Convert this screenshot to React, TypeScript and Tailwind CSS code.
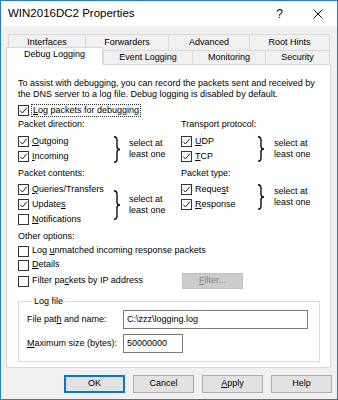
import React from "react";

function Check({ checked }: { checked?: boolean }) {
  return (
    <span className="w-[11px] h-[11px] border border-[#333333] bg-white flex items-center justify-center shrink-0">
      {checked && (
        <svg width="9" height="9" viewBox="0 0 9 9">
          <polyline points="1.2,4.6 3.4,7 7.8,1.6" fill="none" stroke="#222222" strokeWidth="1" />
        </svg>
      )}
    </span>
  );
}

function Row({ checked, children }: { checked?: boolean; children: React.ReactNode }) {
  return (
    <div className="flex items-center gap-[3px] h-[15px]">
      <Check checked={checked} />
      <span className="leading-[11px] whitespace-nowrap">{children}</span>
    </div>
  );
}

function Brace({ h }: { h: number }) {
  const m = h / 2;
  const d = `M1,0.8 Q4,0.8 4,4 L4,${m - 3} Q4,${m} 7,${m} Q4,${m} 4,${m + 3} L4,${h - 4} Q4,${h - 0.8} 1,${h - 0.8}`;
  return (
    <svg width="8" height={h} viewBox={`0 0 8 ${h}`} className="shrink-0">
      <path d={d} fill="none" stroke="#111111" strokeWidth="1.4" />
    </svg>
  );
}

function SelectText() {
  return (
    <div className="leading-[11px] whitespace-nowrap">
      <div>select at</div>
      <div>least one</div>
    </div>
  );
}

function Tab({ label, w, last }: { label: string; w: string; last?: boolean }) {
  return (
    <div
      className={`${w} h-full bg-[#f0f0f0] border-l border-t border-[#d9d9d9] flex items-center justify-center whitespace-nowrap ${
        last ? "border-r" : ""
      }`}
    >
      {label}
    </div>
  );
}

function Btn({ children, primary }: { children: React.ReactNode; primary?: boolean }) {
  return (
    <div
      className={`w-[61px] h-[18px] bg-[#e1e1e1] flex items-center justify-center ${
        primary ? "border-2 border-[#0078d7]" : "border border-[#adadad]"
      }`}
    >
      {children}
    </div>
  );
}

export default function App() {
  return (
    <div className="w-[338px] h-[400px] bg-[#f0f0f0] border border-[#1c7fd6] flex flex-col text-[9px] text-black font-['Liberation_Sans',Arial,sans-serif] overflow-hidden">
      {/* Title bar */}
      <div className="h-[25px] bg-white flex items-center pl-[7px] shrink-0">
        <span className="text-[11.5px]">WIN2016DC2 Properties</span>
        <span className="ml-auto text-[12px] mr-[30px]">?</span>
        <svg width="10" height="10" viewBox="0 0 10 10" className="mr-[14px]">
          <path d="M0.5,0.5 L9.5,9.5 M9.5,0.5 L0.5,9.5" stroke="#111111" strokeWidth="1" />
        </svg>
      </div>

      {/* Tabs */}
      <div className="mt-[8px] ml-[7px] h-[16px] flex shrink-0">
        <Tab label="Interfaces" w="w-[77px]" />
        <Tab label="Forwarders" w="w-[83px]" />
        <Tab label="Advanced" w="w-[81px]" />
        <Tab label="Root Hints" w="w-[81px]" last />
      </div>
      <div className="ml-[5px] h-[14px] flex shrink-0">
        <div className="relative z-10 w-[97px] h-[18px] -mt-[3px] bg-white border-l border-t border-r border-[#d9d9d9] flex items-center justify-center pb-[3px]">
          Debug Logging
        </div>
        <Tab label="Event Logging" w="w-[89px]" />
        <Tab label="Monitoring" w="w-[73px]" />
        <Tab label="Security" w="w-[65px]" last />
      </div>

      {/* Panel */}
      <div className="ml-[5px] w-[325px] h-[304px] bg-white border border-[#d9d9d9] flex flex-col pl-[11px] shrink-0">
        <div className="mt-[13px] leading-[11px]">
          <div>To assist with debugging, you can record the packets sent and received by</div>
          <div>the DNS server to a log file. Debug logging is disabled by default.</div>
        </div>
        <div className="mt-[3px] h-[14px] flex items-center gap-[2px]">
          <Check checked />
          <span className="leading-[11px] border border-dotted border-[#333333] px-[1px]">
            <u>L</u>og packets for debugging
          </span>
        </div>

        <div className="mt-[1px] grid grid-cols-[163px_1fr]">
          <div className="flex flex-col">
            <div className="h-[14px] flex items-center">Packet direction:</div>
            <div className="mt-[2px] flex items-center">
              <div className="w-[95px]">
                <Row checked>
                  <u>O</u>utgoing
                </Row>
                <Row checked>
                  <u>I</u>ncoming
                </Row>
              </div>
              <Brace h={27} />
              <div className="ml-[8px]">
                <SelectText />
              </div>
            </div>
            <div className="mt-[3px] h-[14px] flex items-center">Packet contents:</div>
            <div className="mt-[1px] flex items-center">
              <div className="w-[95px]">
                <Row checked>
                  <u>Q</u>ueries/Transfers
                </Row>
                <Row checked>
                  Update<u>s</u>
                </Row>
                <Row>
                  <u>N</u>otifications
                </Row>
              </div>
              <Brace h={30} />
              <div className="ml-[8px]">
                <SelectText />
              </div>
            </div>
          </div>
          <div className="flex flex-col">
            <div className="h-[14px] flex items-center">Transport protocol:</div>
            <div className="mt-[2px] flex items-center">
              <div className="w-[76px]">
                <Row checked>
                  <u>U</u>DP
                </Row>
                <Row checked>
                  <u>T</u>CP
                </Row>
              </div>
              <Brace h={26} />
              <div className="ml-[9px]">
                <SelectText />
              </div>
            </div>
            <div className="mt-[3px] h-[14px] flex items-center">Packet type:</div>
            <div className="mt-[1px] flex items-center">
              <div className="w-[76px]">
                <Row checked>
                  Reque<u>s</u>t
                </Row>
                <Row checked>
                  <u>R</u>esponse
                </Row>
              </div>
              <Brace h={26} />
              <div className="ml-[9px]">
                <SelectText />
              </div>
            </div>
          </div>
        </div>

        <div className="mt-[3px] h-[14px] flex items-center">Other options:</div>
        <div className="h-[14px] flex items-center gap-[3px]">
          <Check />
          <span>
            Log <u>u</u>nmatched incoming response packets
          </span>
        </div>
        <div className="h-[14px] flex items-center gap-[3px]">
          <Check />
          <span>
            <u>D</u>etails
          </span>
        </div>
        <div className="mt-[1px] h-[16px] flex items-center gap-[3px]">
          <Check />
          <span className="w-[147px]">
            Filter pa<u>c</u>kets by IP address
          </span>
          <div className="w-[61px] h-[16px] bg-[#cccccc] border border-[#bfbfbf] text-[#838383] flex items-center justify-center">
            <span>
              <u>F</u>ilter...
            </span>
          </div>
        </div>

        <fieldset className="mt-[7px] w-[302px] h-[66px] border border-[#dcdcdc] pl-[8px]">
          <legend className="ml-[5px] px-[2px] leading-[11px]">Log file</legend>
          <div className="mt-[3px] flex items-center h-[19px]">
            <span className="w-[96px]">
              File pat<u>h</u> and name:
            </span>
            <div className="w-[185px] h-[19px] border border-[#7a7a7a] bg-white flex items-center pl-[3px]">
              C:\zzz\logging.log
            </div>
          </div>
          <div className="mt-[5px] flex items-center h-[19px]">
            <span className="w-[96px]">
              <u>M</u>aximum size (bytes):
            </span>
            <div className="w-[60px] h-[19px] border border-[#7a7a7a] bg-white flex items-center pl-[3px]">
              50000000
            </div>
          </div>
        </fieldset>
      </div>

      {/* Buttons */}
      <div className="mt-[7px] flex justify-end gap-[8px] pr-[5px]">
        <Btn primary>OK</Btn>
        <Btn>Cancel</Btn>
        <Btn>
          <u>A</u>pply
        </Btn>
        <Btn>Help</Btn>
      </div>
    </div>
  );
}
